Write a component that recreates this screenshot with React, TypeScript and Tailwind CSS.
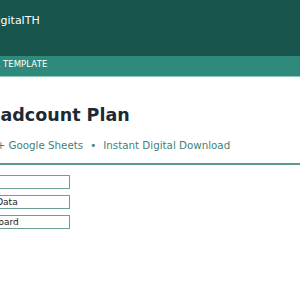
export default function App() {
  const sections = ["Notes", "Input Data", "Dashboard"];

  return (
    <div
      className="w-[300px] h-[300px] overflow-hidden bg-white"
      style={{ fontFamily: '"DejaVu Sans", sans-serif' }}
    >
      <div className="w-[340px] -ml-[40px]">
        <header className="h-[56px] bg-[#17554c] pt-[14px] pl-[29px] text-[11px] leading-[13px] text-white">
          DigitalTH
        </header>
        <div className="h-[21px] bg-[#2e8b7b] border-b border-[#8cc4b9] pt-[3px] pl-[13px] text-[8.5px] leading-[10px] text-white tracking-[0.1px]">
          EXCEL TEMPLATE
        </div>

        <main>
          <h1 className="pt-[28px] pl-[14px] text-[17.5px] leading-[20px] font-bold text-[#1f2933]">
            Headcount Plan
          </h1>
          <p className="mt-[14px] pl-[6px] text-[10.3px] leading-[12px] text-[#3f8278] whitespace-nowrap">
            <span>Excel + Google Sheets</span>
            <span className="px-[7px]">•</span>
            <span>Instant Digital Download</span>
          </p>
          <div className="mt-[12px] h-[2px] bg-[#5b9a91]" />

          <ul className="mt-[10px] ml-[8px] flex flex-col gap-[6px]">
            {sections.map((s) => (
              <li
                key={s}
                className="w-[102px] h-[14px] border border-[#6c9f97] pl-[1px] text-[9px] leading-[12px] text-[#222]"
              >
                {s}
              </li>
            ))}
          </ul>
        </main>
      </div>
    </div>
  );
}
